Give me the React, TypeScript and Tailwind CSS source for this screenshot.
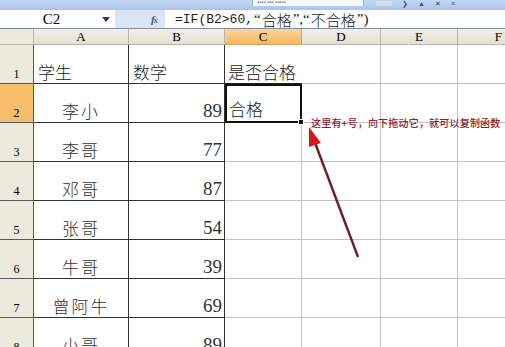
import React from 'react';

const cjk = { fontFamily: '"Noto Sans CJK SC", "Noto Sans", sans-serif' };
const serif = { fontFamily: '"Liberation Serif", "DejaVu Serif", serif' };
const mono = { fontFamily: '"Liberation Mono", "DejaVu Sans Mono", monospace' };

const rows = [
  { n: 1, a: '学生', b: '数学', c: '是否合格', head: true },
  { n: 2, a: '李小', b: '89', c: '合格' },
  { n: 3, a: '李哥', b: '77' },
  { n: 4, a: '邓哥', b: '87' },
  { n: 5, a: '张哥', b: '54' },
  { n: 6, a: '牛哥', b: '39' },
  { n: 7, a: '曾阿牛', b: '69' },
  { n: 8, a: '小哥', b: '89' },
];

export default function App() {
  return (
    <div className="relative w-[505px] h-[347px] overflow-hidden bg-white text-black">
      {/* toolbar strip */}
      <div className="h-[10px] flex bg-gradient-to-b from-[#c4d7f4] to-[#a9c3ec]">
        <div className="w-[252px]" />
        <div className="w-[112px] h-[6px] bg-[#f4f6fa] border-x border-[#9fb3d3] text-[6px] leading-[4px] text-[#8a8f99] overflow-hidden px-1">
          ▪▪▪▪ ▪▪▪ ▪▪▪▪▪
        </div>
        <div className="flex items-start gap-[10px] pl-[12px] pt-[1px] text-[#3a4f7a] text-[7px] leading-[6px]">
          <span className="w-[16px] h-[5px] bg-[#d7dde8]" />
          <span>❯</span>
          <span>▲</span>
          <span>✕</span>
          <span>≡</span>
        </div>
      </div>

      {/* formula bar */}
      <div className="h-[19px] flex border-b border-[#7b8aa6] bg-[#d9e4f5]">
        <div className="w-[97px] bg-white flex items-center justify-center text-[15px] leading-none pl-[6px]" style={serif}>
          C2
        </div>
        <div className="w-[18px] bg-white flex items-center justify-center">
          <svg width="8" height="5" viewBox="0 0 8 5"><path d="M0 0 L8 0 L4 5 Z" fill="#2b3a5c" /></svg>
        </div>
        <div className="w-[36px]" />
        <div className="w-[12px] flex items-center text-[11px] italic font-bold text-[#4a5570]" style={serif}>
          <span>f</span><span className="text-[8px] -ml-[1px] mt-[3px]">x</span>
        </div>
        <div className="flex-1 bg-white ml-[2px] flex items-center pl-[10px] text-[13px] leading-none whitespace-nowrap text-[#222]">
          <span style={mono}>=IF(B2&gt;60,</span>
          <span style={serif} className="text-[15px] mx-[1px]">“</span>
          <span style={cjk} className="font-light text-[15px]">合格</span>
          <span style={serif} className="text-[15px] mx-[1px]">”,“</span>
          <span style={cjk} className="font-light text-[15px]">不合格</span>
          <span style={serif} className="text-[15px] ml-[1px]">”)</span>
        </div>
      </div>

      {/* column headers */}
      <div className="flex h-[16px] text-[13px] leading-none" style={serif}>
        <div className="w-[34px] bg-[#ece9dd] border-r border-b border-[#b9b6a9]" />
        <div className="w-[95px] bg-gradient-to-b from-[#f3f1e8] to-[#e3e0d2] border-r border-b border-[#b9b6a9] flex items-center justify-center">A</div>
        <div className="w-[96px] bg-gradient-to-b from-[#f3f1e8] to-[#e3e0d2] border-r border-b border-[#b9b6a9] flex items-center justify-center">B</div>
        <div className="w-[77px] bg-gradient-to-b from-[#fbd69b] to-[#f5b860] border-r border-b border-[#c9a26a] flex items-center justify-center">C</div>
        <div className="w-[79px] bg-gradient-to-b from-[#f3f1e8] to-[#e3e0d2] border-r border-b border-[#b9b6a9] flex items-center justify-center">D</div>
        <div className="w-[77px] bg-gradient-to-b from-[#f3f1e8] to-[#e3e0d2] border-r border-b border-[#b9b6a9] flex items-center justify-center">E</div>
        <div className="flex-1 bg-gradient-to-b from-[#f3f1e8] to-[#e3e0d2] border-b border-[#b9b6a9] flex items-center justify-end pr-[3px]">F</div>
      </div>

      {/* rows */}
      {rows.map((r) => (
        <div key={r.n} className="flex h-[39px]">
          <div
            className={
              r.n === 2
                ? 'w-[34px] bg-[#f7bd6a] border-r border-b border-[#5a5a5a] flex items-end justify-center pb-[3px] text-[12px] leading-none'
                : 'w-[34px] bg-[#ece9dd] border-r border-b border-[#5a5a5a] flex items-end justify-center pb-[3px] text-[12px] leading-none'
            }
            style={serif}
          >
            {r.n}
          </div>
          <div
            className={
              r.head
                ? 'w-[95px] border-r border-b border-[#333] flex items-end pl-[4px] pb-[3px] text-[17px] leading-none font-light text-[#222]'
                : 'w-[95px] border-r border-b border-[#333] flex items-end justify-center pb-[3px] text-[17px] leading-none font-light text-[#333] tracking-[2px]'
            }
            style={cjk}
          >
            {r.a}
          </div>
          <div
            className={
              r.head
                ? 'w-[96px] border-r border-b border-[#333] flex items-end pl-[4px] pb-[3px] text-[17px] leading-none font-light text-[#222]'
                : 'w-[96px] border-r border-b border-[#333] flex items-end justify-end pr-[2px] pb-[2px] text-[19px] leading-none text-[#333]'
            }
            style={r.head ? cjk : serif}
          >
            {r.b}
          </div>
          <div
            className={
              r.n === 1
                ? 'w-[77px] border-b border-[#222] flex items-end pl-[3px] pb-[3px] text-[17px] leading-none font-light text-[#222]'
                : r.n === 2
                ? 'relative w-[77px] border-2 border-[#111] flex items-end pl-[2px] pb-[4px] text-[17px] leading-none font-light text-[#222]'
                : 'w-[77px] border-r border-b border-[#c4c4c4]'
            }
            style={cjk}
          >
            {r.c}
            {r.n === 2 && (
              <span className="absolute -right-[4px] -bottom-[4px] w-[6px] h-[6px] bg-[#111] border border-white" />
            )}
          </div>
          <div className="w-[79px] border-r border-b border-[#c4c4c4]" />
          <div className="w-[77px] border-r border-b border-[#c4c4c4]" />
          <div className="flex-1 border-b border-[#c4c4c4]" />
        </div>
      ))}

      {/* annotation */}
      <div
        className="absolute left-[311px] top-[118px] text-[10px] leading-none whitespace-nowrap font-medium text-[#8b2133] tracking-[0.2px]"
        style={cjk}
      >
        这里有+号，向下拖动它，就可以复制函数
      </div>
      <svg className="absolute left-0 top-0" width="505" height="347" viewBox="0 0 505 347">
        <line x1="358" y1="257" x2="314" y2="140" stroke="#6e1d2b" strokeWidth="2.4" />
        <path d="M309 127 L321 143 L309 147 Z" fill="#d8151f" />
      </svg>
    </div>
  );
}
